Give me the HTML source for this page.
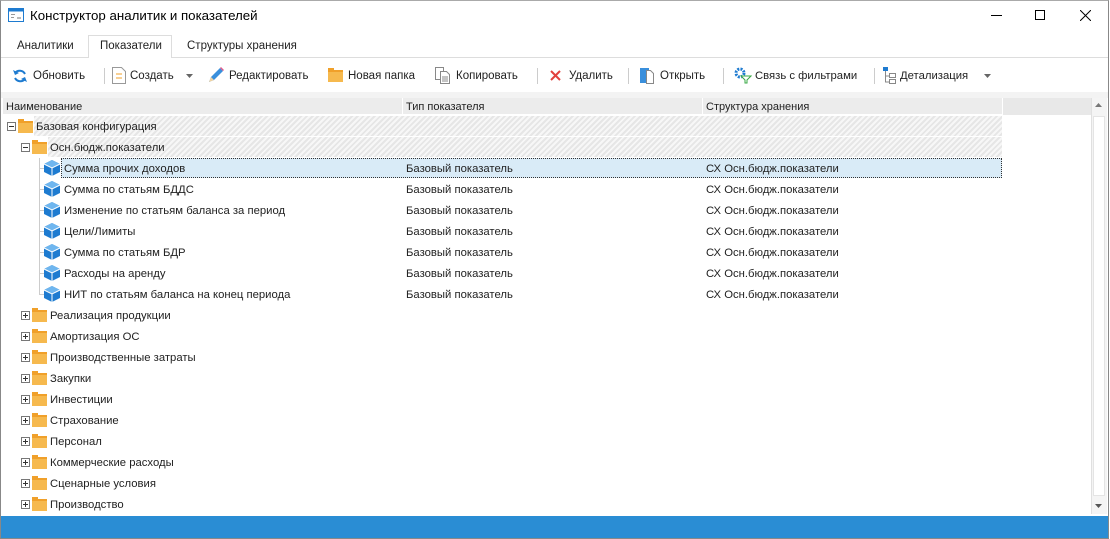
<!DOCTYPE html>
<html><head><meta charset="utf-8"><style>
*{margin:0;padding:0;box-sizing:border-box}
body{width:1110px;height:539px;overflow:hidden;background:#fff;font-family:"Liberation Sans","DejaVu Sans",sans-serif;font-size:11.3px;color:#222;position:relative}
.abs{position:absolute}
.win{position:absolute;left:0;top:0;width:1109px;height:539px;border:1px solid #888;border-top:1px solid #aaa}
.t{position:absolute;white-space:nowrap;line-height:16px}
.tb{font-size:11.5px;line-height:15px}
.hatch{background:repeating-linear-gradient(135deg,#e6e6e6 0 2px,#f7f7f7 2px 4px)}
.folder{position:absolute;width:15px;height:12px;background:#f6b94e;border-top:2px solid #f0a02a}
.folder:before{content:"";position:absolute;left:0;top:-4px;width:6px;height:3px;background:#f0a02a}
.pm{position:absolute;width:9px;height:9px;border:1px solid #777;background:#fff}
.pm:before{content:"";position:absolute;left:1px;top:3px;width:5px;height:1px;background:#333}
.pm.p:after{content:"";position:absolute;left:3px;top:1px;width:1px;height:5px;background:#333}
.sep{position:absolute;top:68px;width:1px;height:16px;background:#ccc}
</style></head><body>
<div class="win"></div>
<svg class="abs" style="left:8px;top:8px" width="16" height="14"><rect x="0.5" y="0.5" width="15" height="13" fill="#fff" stroke="#1e7bd0"/><rect x="0.5" y="0.5" width="15" height="3" fill="#1e7bd0"/><rect x="3" y="6" width="4" height="1" fill="#999"/><rect x="3" y="9" width="3" height="1" fill="#999"/><rect x="9" y="9" width="4" height="2" fill="#bbb"/></svg>
<div class="t" style="left:30px;top:8px;font-size:13.3px;line-height:normal;color:#000">Конструктор аналитик и показателей</div>
<div class="abs" style="left:991px;top:15px;width:11px;height:1px;background:#000"></div>
<div class="abs" style="left:1035px;top:10px;width:10px;height:10px;border:1px solid #000"></div>
<svg class="abs" style="left:1080px;top:10px" width="11" height="11"><path d="M0 0L11 11M11 0L0 11" stroke="#000" stroke-width="1"/></svg>
<div class="abs" style="left:1px;top:57px;width:1107px;height:1px;background:#ddd"></div>
<div class="abs" style="left:88px;top:35px;width:84px;height:23px;border:1px solid #ddd;border-bottom:none;background:#fff"></div>
<div class="t tb" style="left:17px;top:39px">Аналитики</div>
<div class="t tb" style="left:100px;top:39px">Показатели</div>
<div class="t tb" style="left:187px;top:39px">Структуры хранения</div>
<svg class="abs" style="left:12px;top:68px" width="16" height="16"><path d="M13 6A6 6 0 0 0 3 5M3 10A6 6 0 0 0 13 11" stroke="#1e7bd0" stroke-width="2" fill="none"/><path d="M1 2L3 7L7 5Z M15 14L13 9L9 11Z" fill="#1e7bd0"/></svg>
<div class="t tb" style="left:33px;top:69px">Обновить</div>
<div class="sep" style="left:104px"></div>
<svg class="abs" style="left:112px;top:67px" width="14" height="17"><path d="M.5 .5H9.5L13.5 4.5V16.5H.5Z" fill="#fff" stroke="#999"/><path d="M4 7h2M8 7h2M4 11h2M8 11h2M7 6v2M7 10v2" stroke="#f0a02a"/></svg>
<div class="t tb" style="left:130px;top:69px">Создать</div>
<svg class="abs" style="left:186px;top:74px" width="7" height="4"><path d="M0 0H7L3.5 4Z" fill="#666"/></svg>
<svg class="abs" style="left:207px;top:66px" width="18" height="18"><path d="M2 16L4 11L13 2L16 5L7 14Z" fill="#3a8fdc"/><path d="M13 2L16 5L17 4L14 1Z" fill="#e05a8a"/><path d="M2 16L4 11L7 14Z" fill="#f3d3a0"/></svg>
<div class="t tb" style="left:229px;top:69px">Редактировать</div>
<div class="folder" style="left:328px;top:70px"></div>
<div class="t tb" style="left:348px;top:69px">Новая папка</div>
<svg class="abs" style="left:435px;top:67px" width="16" height="17"><path d="M.5 .5H8.5V12.5H.5Z" fill="#fff" stroke="#888"/><path d="M5.5 4.5H11.5L14.5 7.5V16.5H5.5Z" fill="#fff" stroke="#888"/><path d="M7 10h6M7 12h6M7 14h6" stroke="#888"/></svg>
<div class="t tb" style="left:456px;top:69px">Копировать</div>
<div class="sep" style="left:537px"></div>
<svg class="abs" style="left:550px;top:70px" width="11" height="11"><path d="M1 1L10 10M10 1L1 10" stroke="#e2413d" stroke-width="2"/></svg>
<div class="t tb" style="left:569px;top:69px">Удалить</div>
<div class="sep" style="left:628px"></div>
<svg class="abs" style="left:640px;top:67px" width="14" height="17"><path d="M0 1H9V16H0Z" fill="#3a8fdc"/><path d="M6.5 3.5H10.5L13.5 6.5V16.5H6.5Z" fill="#fff" stroke="#888"/></svg>
<div class="t tb" style="left:660px;top:69px">Открыть</div>
<div class="sep" style="left:723px"></div>
<svg class="abs" style="left:734px;top:67px" width="18" height="17"><circle cx="6" cy="6" r="4" fill="none" stroke="#1e7bd0" stroke-width="3" stroke-dasharray="2 1.2"/><path d="M7 9H17L13 13V16H11V13Z" fill="#fff" stroke="#3aa845"/></svg>
<div class="t tb" style="left:755px;top:69px;font-size:11.3px">Связь с фильтрами</div>
<div class="sep" style="left:874px"></div>
<svg class="abs" style="left:882px;top:67px" width="16" height="17"><rect x="1" y="0" width="5" height="4" fill="#1e7bd0"/><path d="M3.5 4V15H7M3.5 9H7" stroke="#888" fill="none"/><rect x="7.5" y="6.5" width="6" height="4" fill="#fff" stroke="#888"/><rect x="7.5" y="12.5" width="6" height="4" fill="#fff" stroke="#888"/></svg>
<div class="t tb" style="left:900px;top:69px;font-size:11.3px">Детализация</div>
<svg class="abs" style="left:984px;top:74px" width="7" height="4"><path d="M0 0H7L3.5 4Z" fill="#666"/></svg>
<div class="abs" style="left:1px;top:92px;width:1107px;height:6px;background:#f3f3f3"></div>
<div class="abs" style="left:3px;top:98px;width:1088px;height:17px;background:#ececec;border-bottom:1px solid #fff"></div>
<div class="abs" style="left:402px;top:98px;width:1px;height:17px;background:#fff"></div>
<div class="abs" style="left:702px;top:98px;width:1px;height:17px;background:#fff"></div>
<div class="abs" style="left:1002px;top:98px;width:1px;height:17px;background:#fff"></div>
<div class="abs" style="left:1003px;top:98px;width:88px;height:17px;background:#e8e8e8"></div>
<div class="t" style="left:6px;top:99px;font-size:11px">Наименование</div>
<div class="t" style="left:406px;top:99px;font-size:11px">Тип показателя</div>
<div class="t" style="left:706px;top:99px;font-size:11px">Структура хранения</div>
<div class="abs" style="left:1091px;top:98px;width:16px;height:416px;background:#f4f4f4;border-left:1px solid #e0e0e0"></div>
<div class="abs" style="left:1093px;top:116px;width:12px;height:380px;background:#fff;border:1px solid #e4e4e4"></div>
<svg class="abs" style="left:1095px;top:103px" width="7" height="4"><path d="M0 4H7L3.5 0Z" fill="#777"/></svg>
<svg class="abs" style="left:1095px;top:504px" width="7" height="4"><path d="M0 0H7L3.5 4Z" fill="#555"/></svg>
<div class="abs hatch" style="left:34px;top:116px;width:968px;height:20px"></div>
<div class="abs hatch" style="left:48px;top:137px;width:954px;height:20px"></div>
<div class="abs" style="left:61px;top:158px;width:941px;height:20px;background:#d9ebf7;border:1px dotted #333"></div>
<div class="pm" style="left:7px;top:122px"></div><div class="folder" style="left:18px;top:121px"></div>
<div class="t" style="left:36px;top:119px">Базовая конфигурация</div>
<div class="pm" style="left:21px;top:143px"></div><div class="folder" style="left:32px;top:142px"></div>
<div class="t" style="left:50px;top:140px">Осн.бюдж.показатели</div>
<div class="abs" style="left:39px;top:158px;width:1px;height:136px;background:#ccc"></div>
<svg width="0" height="0" style="position:absolute"><defs><g id="cube"><path d="M8 0L16 4V12L8 16L0 12V4Z" fill="#1e7bd0"/><path d="M8 0L16 4L8 8L0 4Z" fill="#6fb6ef"/><path d="M8 8V16" stroke="#fff" stroke-width="1"/><path d="M0 4L8 8L16 4" stroke="#fff" fill="none"/></g></defs></svg>
<svg class="abs" style="left:39px;top:158px" width="30" height="150">
<g stroke="#ccc"><path d="M0 10.5H5M0 31.5H5M0 52.5H5M0 73.5H5M0 94.5H5M0 115.5H5M0 136.5H5"/></g>
<use href="#cube" x="5" y="2"/><use href="#cube" x="5" y="23"/><use href="#cube" x="5" y="44"/><use href="#cube" x="5" y="65"/><use href="#cube" x="5" y="86"/><use href="#cube" x="5" y="107"/><use href="#cube" x="5" y="128"/>
</svg>
<div class="t" style="left:64px;top:161px">Сумма прочих доходов</div>
<div class="t" style="left:64px;top:182px">Сумма по статьям БДДС</div>
<div class="t" style="left:64px;top:203px">Изменение по статьям баланса за период</div>
<div class="t" style="left:64px;top:224px">Цели/Лимиты</div>
<div class="t" style="left:64px;top:245px">Сумма по статьям БДР</div>
<div class="t" style="left:64px;top:266px">Расходы на аренду</div>
<div class="t" style="left:64px;top:287px">НИТ по статьям баланса на конец периода</div>
<div class="t" style="left:406px;top:161px">Базовый показатель</div>
<div class="t" style="left:406px;top:182px">Базовый показатель</div>
<div class="t" style="left:406px;top:203px">Базовый показатель</div>
<div class="t" style="left:406px;top:224px">Базовый показатель</div>
<div class="t" style="left:406px;top:245px">Базовый показатель</div>
<div class="t" style="left:406px;top:266px">Базовый показатель</div>
<div class="t" style="left:406px;top:287px">Базовый показатель</div>
<div class="t" style="left:706px;top:161px">СХ Осн.бюдж.показатели</div>
<div class="t" style="left:706px;top:182px">СХ Осн.бюдж.показатели</div>
<div class="t" style="left:706px;top:203px">СХ Осн.бюдж.показатели</div>
<div class="t" style="left:706px;top:224px">СХ Осн.бюдж.показатели</div>
<div class="t" style="left:706px;top:245px">СХ Осн.бюдж.показатели</div>
<div class="t" style="left:706px;top:266px">СХ Осн.бюдж.показатели</div>
<div class="t" style="left:706px;top:287px">СХ Осн.бюдж.показатели</div>
<div class="pm p" style="left:21px;top:311px"></div><div class="folder" style="left:32px;top:310px"></div><div class="t" style="left:50px;top:308px">Реализация продукции</div>
<div class="pm p" style="left:21px;top:332px"></div><div class="folder" style="left:32px;top:331px"></div><div class="t" style="left:50px;top:329px">Амортизация ОС</div>
<div class="pm p" style="left:21px;top:353px"></div><div class="folder" style="left:32px;top:352px"></div><div class="t" style="left:50px;top:350px">Производственные затраты</div>
<div class="pm p" style="left:21px;top:374px"></div><div class="folder" style="left:32px;top:373px"></div><div class="t" style="left:50px;top:371px">Закупки</div>
<div class="pm p" style="left:21px;top:395px"></div><div class="folder" style="left:32px;top:394px"></div><div class="t" style="left:50px;top:392px">Инвестиции</div>
<div class="pm p" style="left:21px;top:416px"></div><div class="folder" style="left:32px;top:415px"></div><div class="t" style="left:50px;top:413px">Страхование</div>
<div class="pm p" style="left:21px;top:437px"></div><div class="folder" style="left:32px;top:436px"></div><div class="t" style="left:50px;top:434px">Персонал</div>
<div class="pm p" style="left:21px;top:458px"></div><div class="folder" style="left:32px;top:457px"></div><div class="t" style="left:50px;top:455px">Коммерческие расходы</div>
<div class="pm p" style="left:21px;top:479px"></div><div class="folder" style="left:32px;top:478px"></div><div class="t" style="left:50px;top:476px">Сценарные условия</div>
<div class="pm p" style="left:21px;top:500px"></div><div class="folder" style="left:32px;top:499px"></div><div class="t" style="left:50px;top:497px">Производство</div>
<div class="abs" style="left:1px;top:516px;width:1107px;height:22px;background:#2a8dd4"></div>
</body></html>
